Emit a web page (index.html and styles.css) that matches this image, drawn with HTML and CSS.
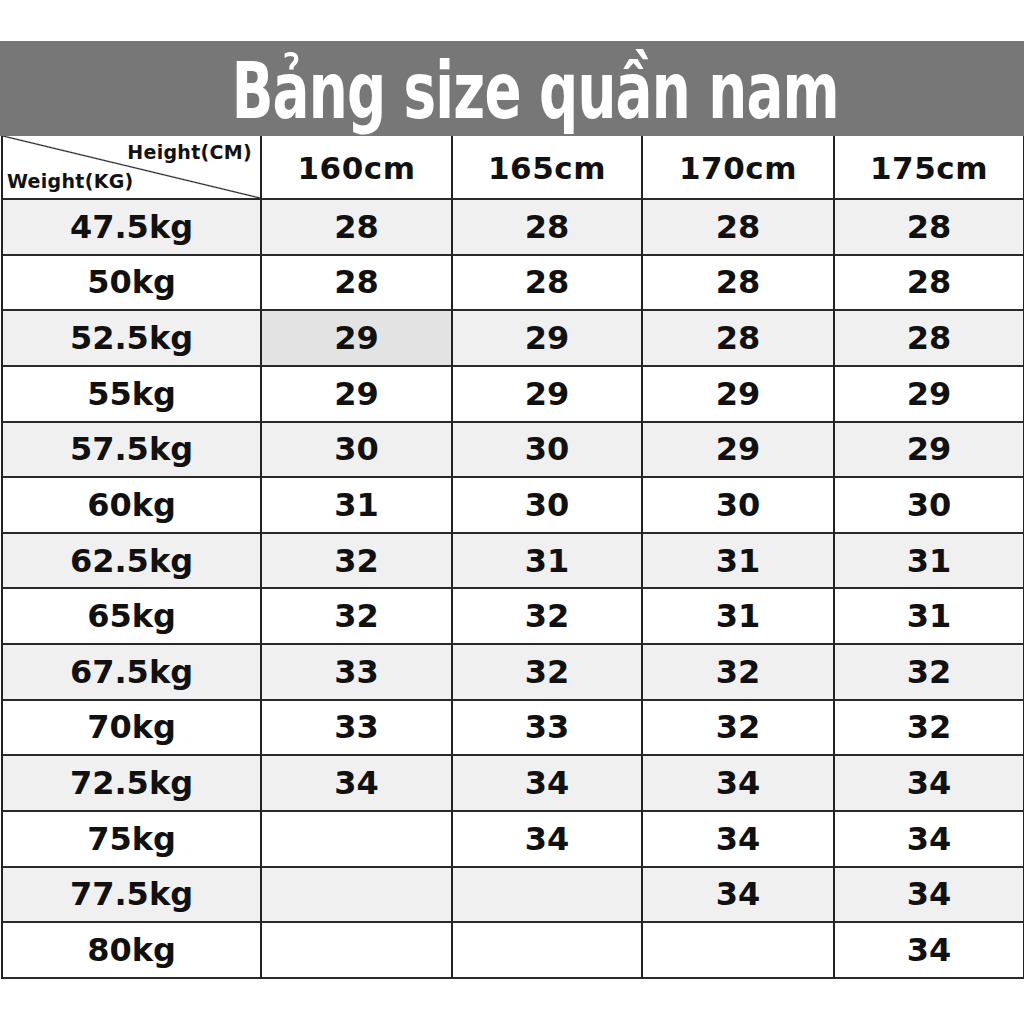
FILE: index.html
```html
<!DOCTYPE html>
<html lang="vi">
<head>
<meta charset="utf-8">
<title>Bảng size quần nam</title>
<link rel="stylesheet" href="styles.css">
</head>
<body>
<div class="page">
  <header class="banner"><h1 class="title"><span>Bảng size quần nam</span></h1></header>
  <div class="grid">
    <div class="cell corner"><span class="h-lbl">Height(CM)</span><span class="w-lbl">Weight(KG)</span></div>
    <div class="cell head">160cm</div><div class="cell head">165cm</div><div class="cell head">170cm</div><div class="cell head">175cm</div>

    <div class="cell alt lbl">47.5kg</div><div class="cell alt">28</div><div class="cell alt">28</div><div class="cell alt">28</div><div class="cell alt">28</div>
    <div class="cell lbl">50kg</div><div class="cell">28</div><div class="cell">28</div><div class="cell">28</div><div class="cell">28</div>
    <div class="cell alt lbl">52.5kg</div><div class="cell alt dark">29</div><div class="cell alt">29</div><div class="cell alt">28</div><div class="cell alt">28</div>
    <div class="cell lbl">55kg</div><div class="cell">29</div><div class="cell">29</div><div class="cell">29</div><div class="cell">29</div>
    <div class="cell alt lbl">57.5kg</div><div class="cell alt">30</div><div class="cell alt">30</div><div class="cell alt">29</div><div class="cell alt">29</div>
    <div class="cell lbl">60kg</div><div class="cell">31</div><div class="cell">30</div><div class="cell">30</div><div class="cell">30</div>
    <div class="cell alt lbl">62.5kg</div><div class="cell alt">32</div><div class="cell alt">31</div><div class="cell alt">31</div><div class="cell alt">31</div>
    <div class="cell lbl">65kg</div><div class="cell">32</div><div class="cell">32</div><div class="cell">31</div><div class="cell">31</div>
    <div class="cell alt lbl">67.5kg</div><div class="cell alt">33</div><div class="cell alt">32</div><div class="cell alt">32</div><div class="cell alt">32</div>
    <div class="cell lbl">70kg</div><div class="cell">33</div><div class="cell">33</div><div class="cell">32</div><div class="cell">32</div>
    <div class="cell alt lbl">72.5kg</div><div class="cell alt">34</div><div class="cell alt">34</div><div class="cell alt">34</div><div class="cell alt">34</div>
    <div class="cell lbl">75kg</div><div class="cell"></div><div class="cell">34</div><div class="cell">34</div><div class="cell">34</div>
    <div class="cell alt lbl">77.5kg</div><div class="cell alt"></div><div class="cell alt"></div><div class="cell alt">34</div><div class="cell alt">34</div>
    <div class="cell lbl">80kg</div><div class="cell"></div><div class="cell"></div><div class="cell"></div><div class="cell">34</div>
  </div>
</div>
</body>
</html>
```

FILE: styles.css
```css
html, body {
  margin: 0;
  padding: 0;
  background: #ffffff;
}

.page {
  width: 1024px;
  padding-top: 41px;
  font-family: "DejaVu Sans", "Liberation Sans", sans-serif;
  color: #111;
}

.banner {
  height: 95px;
  background: #777777;
  display: flex;
  justify-content: center;
}

.title {
  margin: 0;
  font-family: "DejaVu Sans Condensed", "DejaVu Sans", sans-serif;
  font-weight: bold;
  font-size: 78px;
  line-height: 95px;
  color: #ffffff;
  letter-spacing: -1px;
  padding-left: 46px;
}

.title span {
  display: inline-block;
  transform: translateY(3px) scaleX(0.78);
  white-space: nowrap;
}

.grid {
  display: grid;
  grid-template-columns: 259px 191px 190px 192px 190px;
  grid-template-rows: 64px repeat(14, 55.64px);
  margin-left: 1px;
  border-left: 2px solid #222;
  width: 1021px;
}

.cell {
  box-sizing: border-box;
  border-right: 2px solid #222;
  border-bottom: 2px solid #2a2a2a;
  display: flex;
  align-items: center;
  justify-content: center;
  font-weight: bold;
  font-size: 32px;
  background: #ffffff;
}

.cell.alt {
  background: #f0f0f0;
}

.cell.dark {
  background: #e3e3e3;
}

.cell.head {
  font-size: 31px;
  padding-top: 2px;
  letter-spacing: 0.5px;
}

.corner {
  position: relative;
  flex-direction: column;
  align-items: stretch;
  justify-content: flex-start;
  font-size: 19px;
  background: linear-gradient(to top right, transparent calc(50% - 1.2px), #222 50%, transparent calc(50% + 1.2px)), #ffffff;
}

.h-lbl {
  align-self: flex-end;
  padding-right: 8px;
  margin-top: 5px;
  line-height: 22px;
  letter-spacing: 0.3px;
}

.w-lbl {
  align-self: flex-start;
  padding-left: 4px;
  margin-top: 7px;
  line-height: 22px;
  letter-spacing: 0.3px;
}
```
